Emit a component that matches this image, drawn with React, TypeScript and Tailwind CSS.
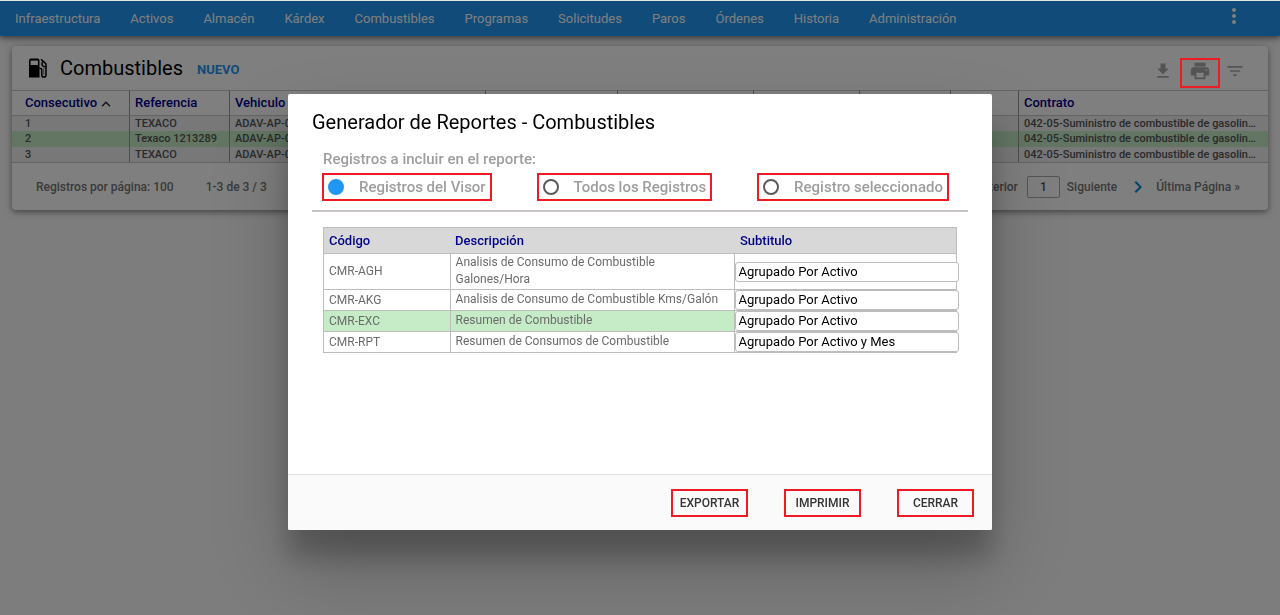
import React from "react";
import { MdDownload, MdPrint, MdFilterList, MdMoreVert, MdNavigateNext } from "react-icons/md";

const menu = [
  "Infraestructura", "Activos", "Almacén", "Kárdex", "Combustibles", "Programas",
  "Solicitudes", "Paros", "Órdenes", "Historia", "Administración",
];

const contract = "042-05-Suministro de combustible de gasolin…";
const rows = [
  { id: "1", ref: "TEXACO", vehicle: "ADAV-AP-0" },
  { id: "2", ref: "Texaco 1213289", vehicle: "ADAV-AP-0", active: true },
  { id: "3", ref: "TEXACO", vehicle: "ADAV-AP-0" },
];

const reports = [
  { code: "CMR-AGH", text: "Analisis de Consumo de Combustible Galones/Hora", sub: "Agrupado Por Activo" },
  { code: "CMR-AKG", text: "Analisis de Consumo de Combustible Kms/Galón", sub: "Agrupado Por Activo" },
  { code: "CMR-EXC", text: "Resumen de Combustible", sub: "Agrupado Por Activo", active: true },
  { code: "CMR-RPT", text: "Resumen de Consumos de Combustible", sub: "Agrupado Por Activo y Mes" },
];

function FuelIcon() {
  return (
    <svg viewBox="0 0 20 20" className="h-5 w-5" fill="none" stroke="#000" aria-hidden="true">
      <path d="M1 19.500V2.500Q1 .5 3 .5H9.500Q11.500 .5 11.500 2.500V19.500Z" fill="#000" stroke="none" />
      <rect x="2.600" y="2.600" width="7.300" height="4.400" fill="#fff" stroke="none" />
      <path d="M11.500 10.500h1q1.300 0 1.300 1.300v5.200a2 2 0 0 0 4.200 0V6.800q0-1-.8-1.700L13 1.300" strokeWidth="1.500" />
      <path d="M15 3.200L14 5.200q-.4 2.600 1.800 3.200l2 .4" strokeWidth="1.400" />
      <path d="M15.800 8.500v8.500" stroke="#777" strokeWidth="1" />
    </svg>
  );
}

function Header() {
  return (
    <header className="flex h-9 items-center justify-between border-t border-[#dfe8e6] bg-[#2196f3] pr-[34px] shadow-[0_2px_5px_rgba(0,0,0,0.4),0_2px_10px_rgba(0,0,0,0.24)]">
      <nav className="flex">
        {menu.map((m) => (
          <a key={m} href="#" className="px-[15px] text-[13px] text-white">{m}</a>
        ))}
      </nav>
      <button aria-label="Más opciones" className="-mt-1.5 text-2xl text-white"><MdMoreVert /></button>
    </header>
  );
}

function Records() {
  const cell = "truncate border-r border-[#999] pl-[5px] last:border-r-0";
  return (
    <section className="mx-3 mt-2.5 rounded-sm bg-white shadow-[0_2px_5px_rgba(0,0,0,0.3),0_2px_10px_rgba(0,0,0,0.2)]">
      <div className="flex h-11 items-center pl-4 pr-[23px]">
        <FuelIcon />
        <h1 className="ml-3 text-xl text-black">Combustibles</h1>
        <button className="ml-3.5 mt-1 text-[13px] font-bold text-[#2196f3]">NUEVO</button>
        <div className="ml-auto mt-1.5 flex items-center text-xl text-[#a8a8a8]">
          <button aria-label="Descargar"><MdDownload /></button>
          <button aria-label="Imprimir" className="relative ml-[7px] mr-[5px] flex h-[30px] w-10 items-center justify-center text-[22px]">
            <MdPrint />
            <span className="absolute inset-x-0 -bottom-0.5 top-0.5 z-20 border-2 border-[#ed1c24]" />
          </button>
          <button aria-label="Filtrar"><MdFilterList /></button>
        </div>
      </div>
      <table className="w-full table-fixed border-separate border-spacing-0 text-left">
        <colgroup>
          <col className="w-[118px]" />
          <col className="w-[100px]" />
          <col className="w-[256px]" />
          <col className="w-[132px]" />
          <col className="w-[136px]" />
          <col className="w-[106px]" />
          <col className="w-[91px]" />
          <col className="w-[68px]" />
          <col />
        </colgroup>
        <thead>
          <tr className="h-[26px] text-[13px] text-[#00008b]">
            {["Consecutivo", "Referencia", "Vehiculo", "", "", "", "", "", "Contrato"].map((h, i) => (
              <th key={i} className="border-y border-r border-y-[#c8c8c8] border-r-[#999] pl-[5px] font-medium first:pl-[13px] last:border-r-0">
                {h}
                {i === 0 && (
                  <svg viewBox="0 0 10 6" className="ml-1 inline h-1.5 w-2.5" fill="none" stroke="#222" strokeWidth="1.300" aria-hidden="true">
                    <path d="M1 5.200L5 1.200L9 5.200" />
                  </svg>
                )}
              </th>
            ))}
          </tr>
        </thead>
        <tbody>
          {rows.map((r) => (
            <tr key={r.id} className={r.active ? "bg-[#c5ecc7] text-[11px] font-medium leading-4 text-[#555]" : "bg-[#f0f0f0] text-[11px] font-medium leading-[15px] text-[#555]"}>
              <td className={cell + " first:pl-[13px]"}>{r.id}</td>
              <td className={cell}>{r.ref}</td>
              <td className={cell}>{r.vehicle}</td>
              <td className={cell} />
              <td className={cell} />
              <td className={cell} />
              <td className={cell} />
              <td className={cell} />
              <td className={cell}>{contract}</td>
            </tr>
          ))}
        </tbody>
      </table>
      <footer className="flex h-12 items-center border-t border-[#c8c8c8] pl-6 pr-7 text-[12px] font-medium text-[#757575]">
        <span>Registros por página: 100</span>
        <span className="ml-8">1-3 de 3 / 3</span>
        <div className="ml-auto flex items-center">
          <a href="#">Anterior</a>
          <input aria-label="Página" defaultValue="1" className="ml-[9px] mr-[7px] h-[22px] w-[33px] rounded-xs border border-[#aaa] text-center text-[12px] text-[#555]" />
          <a href="#">Siguiente</a>
          <button aria-label="Página siguiente" className="ml-[9px] mr-1.5 text-2xl text-[#0288d1]"><MdNavigateNext /></button>
          <a href="#">Última Página »</a>
        </div>
      </footer>
    </section>
  );
}

function Choice({ label, checked }: { label: string; checked?: boolean }) {
  return (
    <label className="flex h-7 items-center gap-[15px] border-2 border-[#ed1c24] px-1 text-[15px] font-medium text-[#9e9e9e]">
      <input
        type="radio"
        name="scope"
        defaultChecked={checked}
        className="h-4 w-4 appearance-none rounded-full border-2 border-[#5a5a5a] checked:border-[#2196f3] checked:bg-[#2196f3]"
      />
      {label}
    </label>
  );
}

function ReportDialog() {
  const td = "border border-[#bdbdbd] px-[5px] pb-px";
  const action = "h-7 w-[77px] border-2 border-[#ed1c24] text-[12px] font-medium text-[#343434]";
  return (
    <div className="fixed inset-0 z-20 flex items-start justify-center pt-[94px]">
      <div role="dialog" aria-labelledby="dialog-title" className="w-[55%] min-w-[660px] rounded-xs bg-white shadow-[0_27px_24px_0_rgba(0,0,0,0.2),0_40px_77px_0_rgba(0,0,0,0.22)]">
        <div className="px-6 pb-[121px] pt-3.5">
          <h2 id="dialog-title" className="text-xl text-black">Generador de Reportes - Combustibles</h2>
          <fieldset className="mt-3 border-b-2 border-[#c8c4c4] pb-[9px]">
            <legend className="pl-[11px] text-[15px] font-medium leading-[22px] text-[#9e9e9e]">Registros a incluir en el reporte:</legend>
            <div className="mt-[3px] flex justify-between pl-2.5 pr-[19px]">
              <Choice label="Registros del Visor" checked />
              <Choice label="Todos los Registros" />
              <Choice label="Registro seleccionado" />
            </div>
          </fieldset>
          <div className="px-[11px] pt-[15px]">
            <table className="w-full table-fixed border-collapse text-left text-[12px] text-[#6b6b6b]">
              <colgroup>
                <col className="w-[20%]" />
                <col className="w-[45%]" />
                <col className="w-[35%]" />
              </colgroup>
              <thead>
                <tr className="h-[26px] border border-[#bdbdbd] bg-[#d8d8d8] text-[13px] text-[#00008b]">
                  {["Código", "Descripción", "Subtitulo"].map((h) => (
                    <th key={h} className="px-[5px] font-medium">{h}</th>
                  ))}
                </tr>
              </thead>
              <tbody>
                {reports.map((r) => (
                  <tr key={r.code} className={r.active ? "h-[21px] bg-[#c5ecc7]" : "h-[21px]"}>
                    <td className={td}>{r.code}</td>
                    <td className={td + " leading-[17px]"}>{r.text}</td>
                    <td className="border border-[#bdbdbd] bg-white">
                      <select aria-label={"Subtitulo " + r.code} className="relative block h-5 w-[calc(100%+3px)] appearance-none rounded-[3px] border border-[#bdbdbd] bg-white pl-0.5 text-[13px] leading-[18px] text-black">
                        <option>{r.sub}</option>
                      </select>
                    </td>
                  </tr>
                ))}
              </tbody>
            </table>
          </div>
        </div>
        <div className="flex h-14 items-center justify-end gap-9 rounded-b-xs border-t border-[#e0e0e0] bg-[#fafafa] pr-[18px]">
          <button className={action}>EXPORTAR</button>
          <button className={action}>IMPRIMIR</button>
          <button className={action}>CERRAR</button>
        </div>
      </div>
    </div>
  );
}

export default function App() {
  return (
    <div className="min-h-screen bg-[#fafafa] font-[Roboto,sans-serif]">
      <Header />
      <Records />
      <div className="fixed inset-0 top-px z-10 bg-black/50" />
      <ReportDialog />
    </div>
  );
}
